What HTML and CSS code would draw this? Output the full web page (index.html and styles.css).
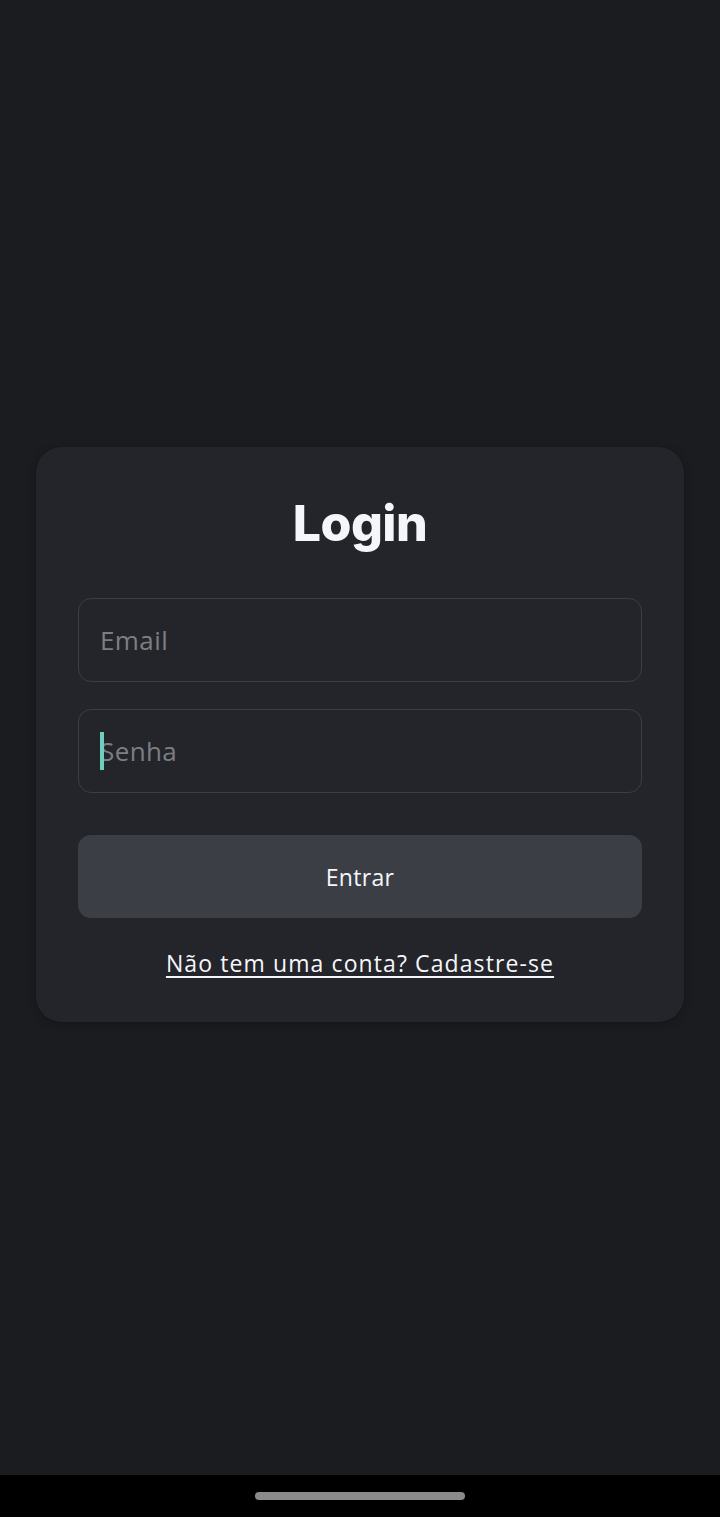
FILE: index.html
```html
<!DOCTYPE html>
<html lang="pt">
<head>
<meta charset="utf-8">
<title>Login</title>
<link rel="stylesheet" href="styles.css">
</head>
<body>
<div class="screen">
  <main class="content">
    <section class="card">
      <h1 class="title">Login</h1>
      <div class="field"><span class="placeholder">Email</span></div>
      <div class="field"><span class="caret"></span><span class="placeholder">Senha</span></div>
      <button class="btn">Entrar</button>
      <a class="link" href="#">Não tem uma conta? Cadastre-se</a>
    </section>
  </main>
  <div class="navbar"><span class="handle"></span></div>
</div>
</body>
</html>
```

FILE: styles.css
```css
* { box-sizing: border-box; }
html, body { margin: 0; padding: 0; }
body {
  width: 720px;
  height: 1517px;
  background: #1b1c20;
  font-family: "Open Sans", "Liberation Sans", sans-serif;
  color: #f5f6fa;
}
.screen {
  display: flex;
  flex-direction: column;
  height: 1517px;
}
.content {
  flex: 1;
  display: flex;
  align-items: center;
  justify-content: center;
  padding-bottom: 6px;
}
.card {
  width: 648px;
  height: 575px;
  background: #24252a;
  border-radius: 26px;
  padding: 45px 42px 0;
  display: flex;
  flex-direction: column;
  box-shadow: 0 2px 8px rgba(0,0,0,0.25);
}
.title {
  margin: 0 0 44px;
  text-align: center;
  font-family: "Inter", "Open Sans", sans-serif;
  font-weight: 800;
  font-size: 50px;
  line-height: 62px;
  letter-spacing: -0.5px;
  color: #f5f6fa;
}
.field {
  position: relative;
  height: 84px;
  border: 1.5px solid #3d3e44;
  border-radius: 13px;
  display: flex;
  align-items: center;
  padding-left: 21px;
  margin-bottom: 27px;
}
.placeholder {
  font-size: 26px;
  color: #7d7e82;
  letter-spacing: 0.4px;
}
.caret {
  position: absolute;
  left: 21px;
  top: 22px;
  width: 4px;
  height: 38px;
  background: #6fcfbf;
}
.btn {
  margin-top: 15px;
  height: 83px;
  border: none;
  border-radius: 13px;
  background: #3c3e46;
  color: #f5f6fa;
  font-family: inherit;
  font-size: 23px;
  letter-spacing: 0.3px;
}
.link {
  margin-top: 29px;
  align-self: center;
  color: #f5f6fa;
  font-size: 23px;
  text-underline-offset: 4px;
  text-decoration-thickness: 2px;
  letter-spacing: 1.1px;
}
.navbar {
  height: 42px;
  background: #000;
  display: flex;
  justify-content: center;
  padding-top: 17px;
}
.handle {
  width: 210px;
  height: 8px;
  border-radius: 4px;
  background: #8b8b8b;
}
```
